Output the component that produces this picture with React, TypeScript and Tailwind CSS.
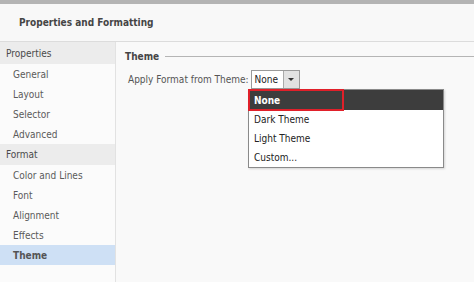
import React from 'react';

const SECTIONS = [
  { title: 'Properties', items: ['General', 'Layout', 'Selector', 'Advanced'] },
  { title: 'Format', items: ['Color and Lines', 'Font', 'Alignment', 'Effects', 'Theme'] },
];

const OPTIONS = ['None', 'Dark Theme', 'Light Theme', 'Custom...'];

export default function App() {
  const active = 'Theme';
  return (
    <div className="w-[474px] h-[282px] overflow-hidden bg-[#f9f9f9] text-[10px] text-[#555] font-['DejaVu_Sans_Condensed','DejaVu_Sans',Tahoma,sans-serif] font-stretch-condensed flex flex-col">
      <div className="h-[4px] bg-[#b4b4b4] shrink-0" />
      <div className="h-[38px] shrink-0 flex items-center pl-[19px] bg-[#f8f8f8] border-b border-[#dcdcdc]">
        <span className="font-bold text-[#454545]">Properties and Formatting</span>
      </div>
      <div className="flex flex-1 min-h-0">
        <div className="w-[116px] shrink-0 bg-[#fbfbfb] border-r border-[#e2e2e2]">
          {SECTIONS.map((s, si) => (
            <div key={s.title}>
              <div
                className={
                  si === 0
                    ? 'h-[22px] flex items-center pl-[6px] bg-[#ececec] text-[#4a4a4a]'
                    : 'h-[21px] flex items-center pl-[6px] bg-[#ececec] text-[#4a4a4a]'
                }
              >
                {s.title}
              </div>
              {s.items.map((it) => (
                <div
                  key={it}
                  className={
                    it === active
                      ? 'h-[20px] flex items-center pl-[13px] bg-[#cee0f5] font-bold text-[#555]'
                      : 'h-[20px] flex items-center pl-[13px] text-[#5a5a5a]'
                  }
                >
                  {it}
                </div>
              ))}
            </div>
          ))}
        </div>
        <div className="flex-1 relative pl-[9px] pt-[7px]">
          <div className="flex items-center gap-[6px]">
            <span className="font-bold text-[#454545]">Theme</span>
            <div className="flex-1 h-px bg-[#b5b5b5]" />
          </div>
          <div className="flex items-center mt-[6px] pl-[3px]">
            <span className="text-[#555] mr-[2px]">Apply Format from Theme:</span>
            <div className="flex h-[19px] border border-[#9a9a9a] bg-white">
              <span className="w-[31px] pl-[3px] flex items-center text-[#222]">None</span>
              <div className="w-[16px] border-l border-[#aaa] bg-[#e2e2e2] flex items-center justify-center">
                <div className="w-0 h-0 border-l-[3px] border-r-[3px] border-t-[3px] border-l-transparent border-r-transparent border-t-[#333]" />
              </div>
            </div>
          </div>
          <div className="absolute left-[132px] top-[47px] w-[196px] bg-white border border-[#8a8a8a] shadow-[1px_1px_2px_rgba(0,0,0,0.15)]">
            {OPTIONS.map((o, i) => (
              <div
                key={o}
                className={
                  i === 0
                    ? 'h-[20px] flex items-center pl-[5px] bg-[#3d3d3d] text-white font-bold'
                    : 'h-[19px] flex items-center pl-[5px] text-[#222]'
                }
              >
                {o}
              </div>
            ))}
            <div className="absolute left-[-1px] top-[-1px] w-[96px] h-[22px] border-2 border-[#e0202a]" />
          </div>
        </div>
      </div>
    </div>
  );
}
